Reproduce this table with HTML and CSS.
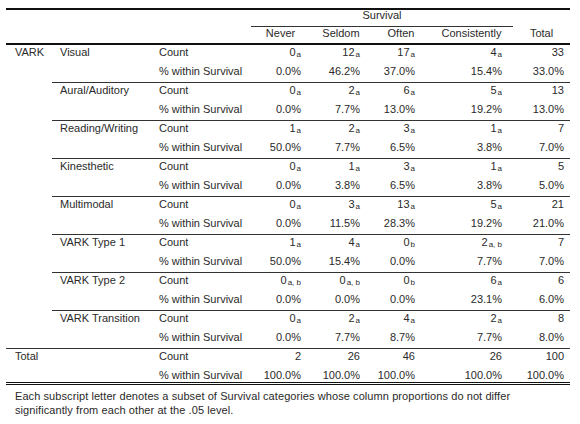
FILE: index.html
```html
<!DOCTYPE html>
<html lang="en">
<head>
  <meta charset="UTF-8" />
  <title>VARK * Survival Crosstabulation</title>
  <link rel="stylesheet" href="styles.css">
</head>
<body>

  <div class="report">
    <table class="crosstab">
      <colgroup>
        <col class="c-var">
        <col class="c-cat">
        <col class="c-stat">
        <col class="c-never">
        <col class="c-seldom">
        <col class="c-often">
        <col class="c-cons">
        <col class="c-total">
      </colgroup>
      <thead>
        <tr class="head-top">
          <th class="corner" colspan="3" rowspan="2"></th>
          <th class="span-head" colspan="4">Survival</th>
          <th class="total-head" rowspan="2">Total</th>
        </tr>
        <tr class="head-cols">
          <th>Never</th>
          <th>Seldom</th>
          <th>Often</th>
          <th>Consistently</th>
        </tr>
      </thead>

      <tbody>
        <tr class="count">
          <th class="var" rowspan="16">VARK</th>
          <th class="cat" rowspan="2">Visual</th>
          <th class="stat">Count</th>
          <td>0<sub>a</sub></td><td>12<sub>a</sub></td><td>17<sub>a</sub></td><td>4<sub>a</sub></td><td>33</td>
        </tr>
        <tr class="pct">
          <th class="stat">% within Survival</th>
          <td>0.0%</td><td>46.2%</td><td>37.0%</td><td>15.4%</td><td>33.0%</td>
        </tr>

        <tr class="count">
          <th class="cat" rowspan="2">Aural/Auditory</th>
          <th class="stat">Count</th>
          <td>0<sub>a</sub></td><td>2<sub>a</sub></td><td>6<sub>a</sub></td><td>5<sub>a</sub></td><td>13</td>
        </tr>
        <tr class="pct">
          <th class="stat">% within Survival</th>
          <td>0.0%</td><td>7.7%</td><td>13.0%</td><td>19.2%</td><td>13.0%</td>
        </tr>

        <tr class="count">
          <th class="cat" rowspan="2">Reading/Writing</th>
          <th class="stat">Count</th>
          <td>1<sub>a</sub></td><td>2<sub>a</sub></td><td>3<sub>a</sub></td><td>1<sub>a</sub></td><td>7</td>
        </tr>
        <tr class="pct">
          <th class="stat">% within Survival</th>
          <td>50.0%</td><td>7.7%</td><td>6.5%</td><td>3.8%</td><td>7.0%</td>
        </tr>

        <tr class="count">
          <th class="cat" rowspan="2">Kinesthetic</th>
          <th class="stat">Count</th>
          <td>0<sub>a</sub></td><td>1<sub>a</sub></td><td>3<sub>a</sub></td><td>1<sub>a</sub></td><td>5</td>
        </tr>
        <tr class="pct">
          <th class="stat">% within Survival</th>
          <td>0.0%</td><td>3.8%</td><td>6.5%</td><td>3.8%</td><td>5.0%</td>
        </tr>

        <tr class="count">
          <th class="cat" rowspan="2">Multimodal</th>
          <th class="stat">Count</th>
          <td>0<sub>a</sub></td><td>3<sub>a</sub></td><td>13<sub>a</sub></td><td>5<sub>a</sub></td><td>21</td>
        </tr>
        <tr class="pct">
          <th class="stat">% within Survival</th>
          <td>0.0%</td><td>11.5%</td><td>28.3%</td><td>19.2%</td><td>21.0%</td>
        </tr>

        <tr class="count">
          <th class="cat" rowspan="2">VARK Type 1</th>
          <th class="stat">Count</th>
          <td>1<sub>a</sub></td><td>4<sub>a</sub></td><td>0<sub>b</sub></td><td>2<sub>a, b</sub></td><td>7</td>
        </tr>
        <tr class="pct">
          <th class="stat">% within Survival</th>
          <td>50.0%</td><td>15.4%</td><td>0.0%</td><td>7.7%</td><td>7.0%</td>
        </tr>

        <tr class="count">
          <th class="cat" rowspan="2">VARK Type 2</th>
          <th class="stat">Count</th>
          <td>0<sub>a, b</sub></td><td>0<sub>a, b</sub></td><td>0<sub>b</sub></td><td>6<sub>a</sub></td><td>6</td>
        </tr>
        <tr class="pct">
          <th class="stat">% within Survival</th>
          <td>0.0%</td><td>0.0%</td><td>0.0%</td><td>23.1%</td><td>6.0%</td>
        </tr>

        <tr class="count">
          <th class="cat" rowspan="2">VARK Transition</th>
          <th class="stat">Count</th>
          <td>0<sub>a</sub></td><td>2<sub>a</sub></td><td>4<sub>a</sub></td><td>2<sub>a</sub></td><td>8</td>
        </tr>
        <tr class="pct">
          <th class="stat">% within Survival</th>
          <td>0.0%</td><td>7.7%</td><td>8.7%</td><td>7.7%</td><td>8.0%</td>
        </tr>
      </tbody>

      <tbody class="grand">
        <tr class="count">
          <th class="cat" colspan="2" rowspan="2">Total</th>
          <th class="stat">Count</th>
          <td>2</td><td>26</td><td>46</td><td>26</td><td>100</td>
        </tr>
        <tr class="pct">
          <th class="stat">% within Survival</th>
          <td>100.0%</td><td>100.0%</td><td>100.0%</td><td>100.0%</td><td>100.0%</td>
        </tr>
      </tbody>
    </table>

    <p class="note">Each subscript letter denotes a subset of Survival categories whose column proportions do not differ significantly from each other at the .05 level.</p>
  </div>

</body>
</html>
```

FILE: styles.css
```css
html, body {
  margin: 0;
  padding: 0;
  background: #fff;
}

body {
  font-family: "Liberation Sans", Arial, sans-serif;
  font-size: 11px;
  color: #2a2a2a;
}

.report {
  width: 564px;
  margin: 8px 0 0 6px;
}

.crosstab {
  width: 564px;
  table-layout: fixed;
  border-collapse: separate;
  border-spacing: 0;
}

.crosstab th,
.crosstab td {
  padding: 0;
  font-weight: normal;
  vertical-align: top;
  white-space: nowrap;
  line-height: 15px;
}

.c-var { width: 46px; }
.c-cat { width: 98px; }
.c-stat { width: 101px; }
.c-never { width: 59px; }
.c-seldom { width: 62px; }
.c-often { width: 58px; }
.c-cons { width: 83px; }
.c-total { width: 57px; }

/* header */
.head-top th {
  border-top: 2px solid #111;
}

.span-head {
  text-align: center;
  line-height: 10px !important;
  padding-bottom: 6px !important;
  border-bottom: 1px solid #333;
}

.corner,
.total-head {
  border-bottom: 2px solid #111;
  vertical-align: bottom !important;
}

.total-head,
.head-cols th {
  text-align: center;
  line-height: 12px !important;
  padding-bottom: 4px !important;
}

.head-cols th {
  border-bottom: 2px solid #111;
}

/* body */
.crosstab tbody th {
  text-align: left;
}

.var { padding-left: 9px !important; border-bottom: 1px solid #333; }
.cat { padding-left: 8px !important; border-bottom: 1px solid #333; }
.stat { padding-left: 9px !important; }

.crosstab td {
  text-align: right;
}

.crosstab td:nth-of-type(1) { padding-right: 9px; }
.crosstab td:nth-of-type(2) { padding-right: 12px; }
.crosstab td:nth-of-type(3) { padding-right: 15px; }
.crosstab td:nth-of-type(4) { padding-right: 11px; }
.crosstab td:nth-of-type(5) { padding-right: 6px; }

.count .stat,
.count td {
  padding-bottom: 4px;
}

.pct .stat,
.pct td {
  padding-bottom: 3px;
  border-bottom: 1px solid #333;
}

.crosstab sub {
  font-size: 8px;
  line-height: 0;
  vertical-align: -1px;
  margin-left: 1px;
}

/* total block */
.grand .cat {
  padding-left: 9px !important;
  border-bottom: 3px double #111;
}

.grand .pct .stat,
.grand .pct td {
  line-height: 14px;
  padding-bottom: 0;
  border-bottom: 3px double #111;
}

.note {
  margin: 0;
  padding: 4px 9px 0;
  line-height: 14px;
  letter-spacing: 0.08px;
}
```
